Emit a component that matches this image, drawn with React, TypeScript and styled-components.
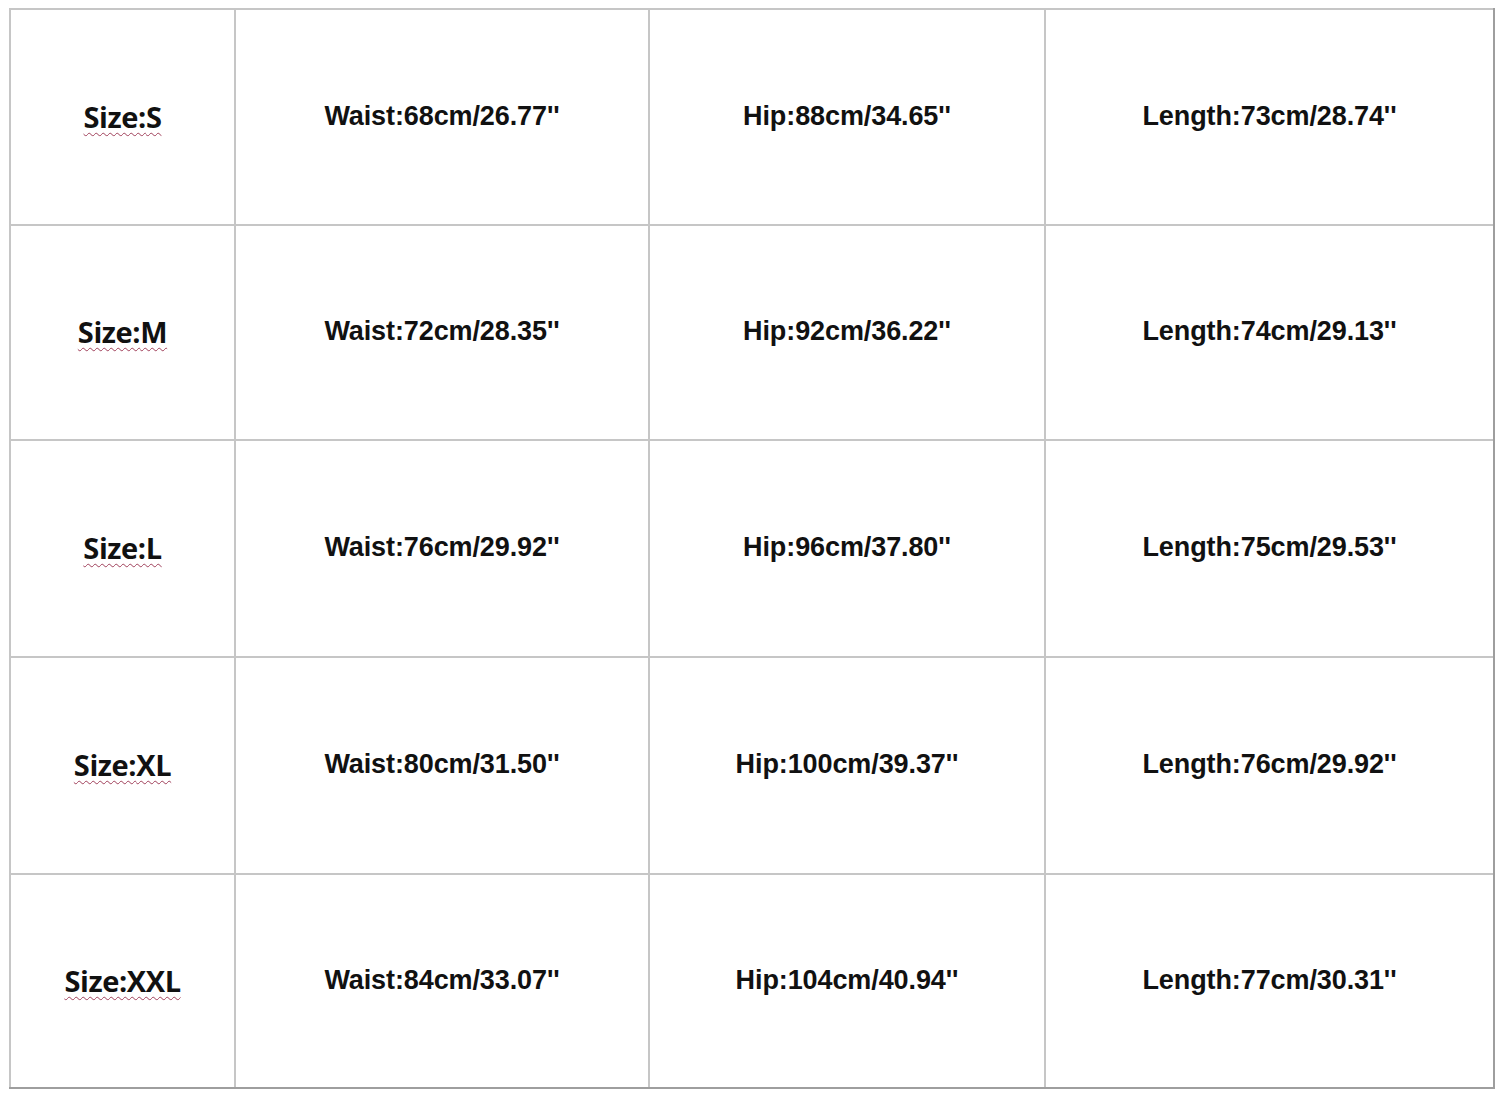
import React from "react";
import styled, { createGlobalStyle } from "styled-components";

const GlobalStyle = createGlobalStyle`
  html, body {
    margin: 0;
    padding: 0;
    background: #ffffff;
  }
`;

const Page = styled.div`
  width: 1500px;
  height: 1093px;
  padding: 8px 0 0 9px;
  box-sizing: border-box;
  background: #ffffff;
`;

const Table = styled.div`
  display: grid;
  grid-template-columns: 225px 414px 396px 449px;
  grid-template-rows: 216px 215px 217px 217px 214px;
  width: 1486px;
  box-sizing: border-box;
  border-right: 2px solid #9e9e9e;
  border-bottom: 2px solid #9e9e9e;
`;

const Cell = styled.div`
  display: flex;
  align-items: center;
  justify-content: center;
  border-left: 2px solid #c6c6c6;
  border-top: 2px solid #c6c6c6;
  box-sizing: border-box;
  padding-bottom: 2px;
`;

const SizeLabel = styled.span`
  font-family: "Open Sans", "Noto Sans", sans-serif;
  font-weight: 700;
  font-size: 29px;
  color: #111111;
  letter-spacing: -0.4px;
  text-decoration: underline wavy #a0405a;
  text-decoration-thickness: 1px;
  text-underline-offset: 4px;
`;

const Value = styled.span`
  font-family: "Liberation Sans", Arial, sans-serif;
  font-weight: 700;
  font-size: 27px;
  color: #111111;
  letter-spacing: -0.1px;
`;

const rows = [
  { size: "S", waist: "68cm/26.77''", hip: "88cm/34.65''", length: "73cm/28.74''" },
  { size: "M", waist: "72cm/28.35''", hip: "92cm/36.22''", length: "74cm/29.13''" },
  { size: "L", waist: "76cm/29.92''", hip: "96cm/37.80''", length: "75cm/29.53''" },
  { size: "XL", waist: "80cm/31.50''", hip: "100cm/39.37''", length: "76cm/29.92''" },
  { size: "XXL", waist: "84cm/33.07''", hip: "104cm/40.94''", length: "77cm/30.31''" },
];

const App: React.FC = () => {
  return (
    <Page>
      <GlobalStyle />
      <Table>
        {rows.map((r) => (
          <React.Fragment key={r.size}>
            <Cell>
              <SizeLabel>Size:{r.size}</SizeLabel>
            </Cell>
            <Cell>
              <Value>Waist:{r.waist}</Value>
            </Cell>
            <Cell>
              <Value>Hip:{r.hip}</Value>
            </Cell>
            <Cell>
              <Value>Length:{r.length}</Value>
            </Cell>
          </React.Fragment>
        ))}
      </Table>
    </Page>
  );
};

export default App;
